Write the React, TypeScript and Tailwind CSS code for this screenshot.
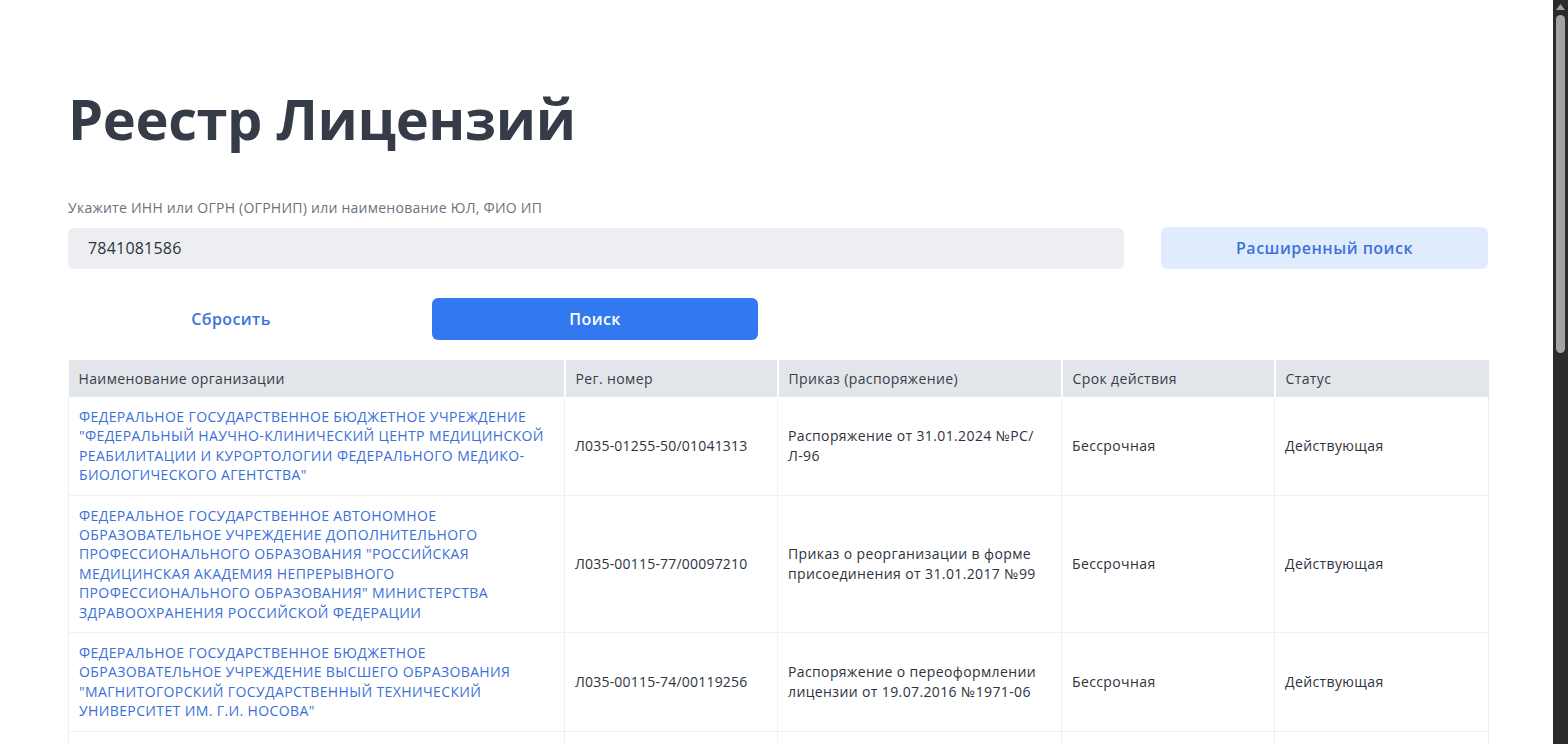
import React from "react";

const rows = [
  {
    name: 'ФЕДЕРАЛЬНОЕ ГОСУДАРСТВЕННОЕ БЮДЖЕТНОЕ УЧРЕЖДЕНИЕ "ФЕДЕРАЛЬНЫЙ НАУЧНО-КЛИНИЧЕСКИЙ ЦЕНТР МЕДИЦИНСКОЙ РЕАБИЛИТАЦИИ И КУРОРТОЛОГИИ ФЕДЕРАЛЬНОГО МЕДИКО-БИОЛОГИЧЕСКОГО АГЕНТСТВА"',
    reg: "Л035-01255-50/01041313",
    order: "Распоряжение от 31.01.2024 №РС/Л-96",
  },
  {
    name: 'ФЕДЕРАЛЬНОЕ ГОСУДАРСТВЕННОЕ АВТОНОМНОЕ ОБРАЗОВАТЕЛЬНОЕ УЧРЕЖДЕНИЕ ДОПОЛНИТЕЛЬНОГО ПРОФЕССИОНАЛЬНОГО ОБРАЗОВАНИЯ "РОССИЙСКАЯ МЕДИЦИНСКАЯ АКАДЕМИЯ НЕПРЕРЫВНОГО ПРОФЕССИОНАЛЬНОГО ОБРАЗОВАНИЯ" МИНИСТЕРСТВА ЗДРАВООХРАНЕНИЯ РОССИЙСКОЙ ФЕДЕРАЦИИ',
    reg: "Л035-00115-77/00097210",
    order: "Приказ о реорганизации в форме присоединения от 31.01.2017 №99",
  },
  {
    name: 'ФЕДЕРАЛЬНОЕ ГОСУДАРСТВЕННОЕ БЮДЖЕТНОЕ ОБРАЗОВАТЕЛЬНОЕ УЧРЕЖДЕНИЕ ВЫСШЕГО ОБРАЗОВАНИЯ "МАГНИТОГОРСКИЙ ГОСУДАРСТВЕННЫЙ ТЕХНИЧЕСКИЙ УНИВЕРСИТЕТ ИМ. Г.И. НОСОВА"',
    reg: "Л035-00115-74/00119256",
    order: "Распоряжение о переоформлении лицензии от 19.07.2016 №1971-06",
  },
  {
    name: 'ФЕДЕРАЛЬНОЕ ГОСУДАРСТВЕННОЕ БЮДЖЕТНОЕ ОБРАЗОВАТЕЛЬНОЕ УЧРЕЖДЕНИЕ ВЫСШЕГО ОБРАЗОВАНИЯ "САНКТ-ПЕТЕРБУРГСКИЙ ГОСУДАРСТВЕННЫЙ УНИВЕРСИТЕТ"',
    reg: "Л035-00115-78/00125487",
    order: "Распоряжение о переоформлении лицензии от 12.05.2016 №1203-06",
  },
];

export default function App() {
  return (
    <div
      className="h-screen flex bg-white text-[#374151] overflow-hidden"
      style={{ fontFamily: '"Open Sans", "Noto Sans", sans-serif' }}
    >
      <main className="flex-1 overflow-hidden">
        <div className="w-[1420px] ml-[68px] pt-[82px]">
          <h1 className="text-[56px] leading-[72px] font-bold text-[#363c47] tracking-[-0.4px]">
            Реестр Лицензий
          </h1>

          <div className="mt-[44px] text-[14px] leading-[20px] text-[#6b7280] tracking-[0.25px]">
            Укажите ИНН или ОГРН (ОГРНИП) или наименование ЮЛ, ФИО ИП
          </div>

          <div className="mt-[9px] flex items-center gap-[37px]">
            <div className="flex-1 h-[41px] rounded-[6px] bg-[#eceef1] flex items-center px-[20px] text-[16px] text-[#2d333d] tracking-[0.2px]">
              7841081586
            </div>
            <button className="w-[327px] h-[42px] rounded-[6px] bg-[#e0ecfd] text-[#3b73dc] text-[16px] font-semibold tracking-[0.5px]">
              Расширенный поиск
            </button>
          </div>

          <div className="mt-[29px] flex items-center gap-[38px]">
            <button className="w-[326px] h-[42px] rounded-[6px] text-[#3b73dc] text-[16px] font-semibold tracking-[0.4px]">
              Сбросить
            </button>
            <button className="w-[326px] h-[42px] rounded-[6px] bg-[#3279f0] text-white text-[16px] font-semibold tracking-[0.4px]">
              Поиск
            </button>
          </div>

          <table className="mt-[20px] w-full border-collapse text-[14px] leading-[19.4px] table-fixed tracking-[0.38px]">
            <colgroup>
              <col className="w-[496px]" />
              <col className="w-[213px]" />
              <col className="w-[284px]" />
              <col className="w-[213px]" />
              <col className="w-[214px]" />
            </colgroup>
            <thead>
              <tr className="bg-[#e2e5ea] text-[#373d48]">
                <th className="h-[37px] px-[10px] text-left font-normal border-r-2 border-white">Наименование организации</th>
                <th className="px-[10px] text-left font-normal border-r-2 border-white">Рег. номер</th>
                <th className="px-[10px] text-left font-normal border-r-2 border-white">Приказ (распоряжение)</th>
                <th className="px-[10px] text-left font-normal border-r-2 border-white">Срок действия</th>
                <th className="px-[10px] text-left font-normal">Статус</th>
              </tr>
            </thead>
            <tbody>
              {rows.map((r, i) => (
                <tr key={i} className="border-b border-[#eef0f3]">
                  <td className="px-[10px] py-[10px] align-middle text-[#3a70d8] border-l border-r border-[#eef0f3]">
                    {r.name}
                  </td>
                  <td className="px-[10px] py-[10px] align-middle text-[#2d333d] border-r border-[#eef0f3] tracking-[0.2px]">{r.reg}</td>
                  <td className="px-[10px] py-[10px] align-middle text-[#2d333d] border-r border-[#eef0f3]">{r.order}</td>
                  <td className="px-[10px] py-[10px] align-middle text-[#2d333d] border-r border-[#eef0f3]">Бессрочная</td>
                  <td className="px-[10px] py-[10px] align-middle text-[#2d333d] border-r border-[#eef0f3]">Действующая</td>
                </tr>
              ))}
            </tbody>
          </table>
        </div>
      </main>

      <div className="w-[15px] shrink-0 bg-[#2b2b2b] flex flex-col items-center pt-[4px]">
        <svg width="9" height="6" viewBox="0 0 9 6" className="shrink-0">
          <path d="M4.5 0 L9 6 L0 6 Z" fill="#9e9e9e" />
        </svg>
        <div className="mt-[5px] w-[9px] h-[338px] rounded-full bg-[#a3a3a3]" />
      </div>
    </div>
  );
}
